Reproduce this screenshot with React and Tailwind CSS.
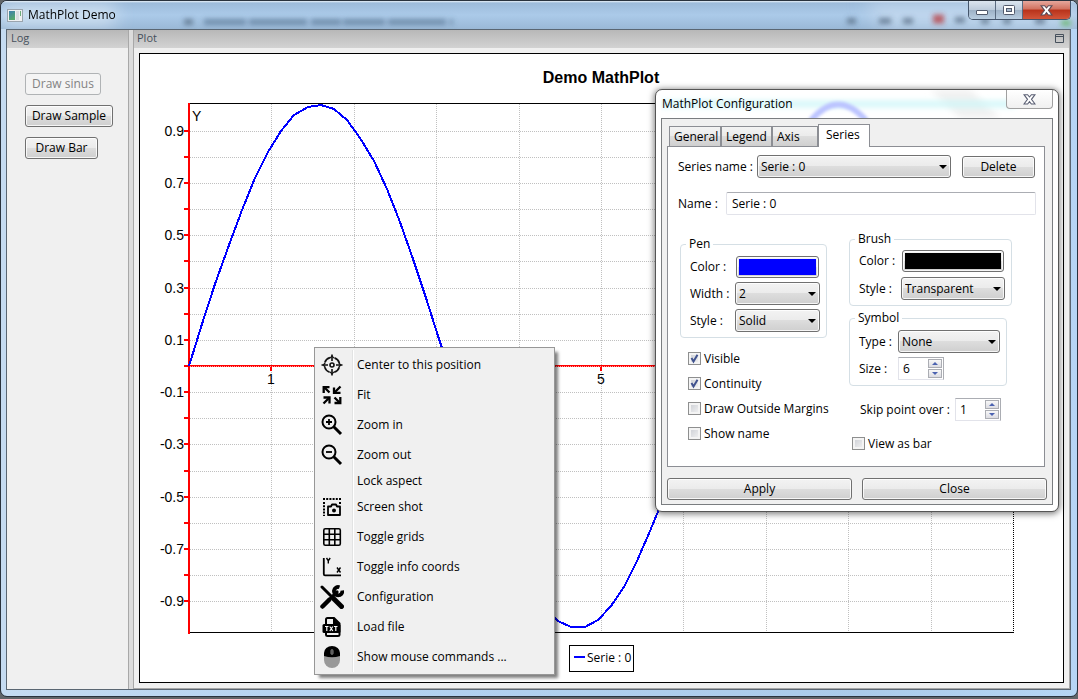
import React from "react";

const X0 = 189;
const Y0 = 366;
const UNIT_X = 82.4;
const UNIT_Y = 261.6;

const px = (x) => Math.round(X0 + x * UNIT_X);
const py = (y) => Math.round(Y0 - y * UNIT_Y);

const sinePoints = Array.from({ length: 63 }, (_, i) => {
  const x = i * 0.16;
  return `${px(x)},${py(Math.sin(x))}`;
}).join(" ");

const columns = [1, 2, 3, 4, 5, 6, 7, 8, 9];
const rows = Array.from({ length: 19 }, (_, i) => (9 - i) / 10);

function Chart() {
  return (
    <svg
      viewBox="140 54 923 628"
      className="block h-full w-full font-['Liberation_Sans',sans-serif]"
      role="img"
      aria-label="Demo MathPlot"
    >
      <text x="601" y="83" textAnchor="middle" fontSize="16" fontWeight="700">
        Demo MathPlot
      </text>
      <g shapeRendering="crispEdges" fill="none">
        <path d="M190 103.5H1013M190 632.5H1013" stroke="#000" />
        <path d="M1013.5 104V633" stroke="#000" strokeDasharray="1 1" />
        {columns.map((c) => (
          <path key={c} d={`M${px(c) + 0.5} 104V632`} stroke="#c0c0c0" strokeDasharray="1 1" />
        ))}
        {rows.map((r) => (
          <path key={r} d={`M190 ${py(r) + 0.5}H1013`} stroke="#c0c0c0" strokeDasharray="1 1" />
        ))}
        <path d="M188 366H1013" stroke="#f00" strokeWidth="2" />
        <path d="M190 366.5H1013" stroke="#ff9a9a" strokeDasharray="1 1" />
        <path d="M189 103V634" stroke="#f00" strokeWidth="2" />
        {columns.map((c) => (
          <path key={c} d={`M${px(c)} 367V371`} stroke="#f00" strokeWidth="2" />
        ))}
        {rows.map((r) => (
          <path key={r} d={`M184 ${py(r)}H188`} stroke="#f00" strokeWidth="2" />
        ))}
        <polyline points={sinePoints} stroke="#00f" strokeWidth="2" />
      </g>
      <g fontSize="14">
        <text x="192" y="121">Y</text>
        {rows
          .filter((r) => Math.round(Math.abs(r) * 10) % 2 === 1)
          .map((r) => (
            <text key={r} x="184" y={py(r) + 5} textAnchor="end">
              {r.toFixed(1)}
            </text>
          ))}
        {[1, 3, 5, 7, 9].map((c) => (
          <text key={c} x={px(c)} y="384" textAnchor="middle">
            {c}
          </text>
        ))}
      </g>
      <rect x="569.5" y="645.5" width="64" height="26" fill="#fff" stroke="#000" />
      <path d="M574 657H585" stroke="#00f" strokeWidth="2" />
      <text x="587" y="662" fontSize="12" className="font-['Open_Sans',sans-serif]">
        Serie : 0
      </text>
    </svg>
  );
}

const icons = {
  center: (
    <g fill="none" stroke="#111">
      <circle cx="12" cy="12" r="7.6" strokeWidth="1.7" strokeDasharray="7.3 4.64" strokeDashoffset="-2.32" />
      <circle cx="12" cy="12" r="2" strokeWidth="1.6" />
      <path d="M12 1.5V8M12 16V22.5M1.5 12H8M16 12H22.5" strokeWidth="1.6" />
      <path
        d="M10 5.200L12 3.200L14 5.200M10 18.800L12 20.800L14 18.800M5.200 10L3.200 12L5.200 14M18.800 10L20.800 12L18.800 14"
        strokeWidth="1.2"
      />
    </g>
  ),
  fit: (
    <g fill="none" stroke="#000" strokeWidth="2.3">
      <path d="M4 4L9.500 9.500M20.500 3.500L14.500 9.500M3.500 20.500L9.500 14.500M14.500 14.500L20 20" />
      <path d="M3.700 10V4.200H9.500M14 4.500V9.800H20.500M3.500 14.500H9.500V20.500M20.300 14V20H14.500" />
    </g>
  ),
  zoomIn: (
    <g fill="none" stroke="#000">
      <circle cx="9" cy="9" r="6.500" strokeWidth="2" />
      <path d="M13.500 13.500L21 21" strokeWidth="3" />
      <path d="M6 9H12M9 6V12" strokeWidth="1.8" />
    </g>
  ),
  zoomOut: (
    <g fill="none" stroke="#000">
      <circle cx="9" cy="9" r="6.500" strokeWidth="2" />
      <path d="M13.500 13.500L21 21" strokeWidth="3" />
      <path d="M6 9H12" strokeWidth="1.8" />
    </g>
  ),
  shot: (
    <g>
      <path
        d="M3 4H21M4 7V21M20 7V9"
        fill="none"
        stroke="#000"
        strokeWidth="2"
        strokeDasharray="2 1.200"
      />
      <path
        d="M8 11.500H11L12 9.500H16L17 11.500H20V20H8Z"
        fill="none"
        stroke="#000"
        strokeWidth="1.8"
        strokeLinejoin="round"
      />
      <circle cx="14" cy="15.500" r="2" />
    </g>
  ),
  grid: (
    <g fill="none" stroke="#000" strokeWidth="1.6">
      <rect x="3.800" y="3.800" width="16.500" height="16.500" rx="1.500" />
      <path d="M9.300 3.800V20.300M14.800 3.800V20.300M3.800 9.300H20.300M3.800 14.800H20.300" />
    </g>
  ),
  coords: (
    <g fill="none" stroke="#000">
      <path d="M3.800 3V19Q3.800 20.300 5 20.300H21" strokeWidth="1.8" />
      <path d="M6.500 3L8.300 5.700L10.200 3M8.300 5.700V8.500M17 12.500L20.500 17.500M20.500 12.500L17 17.500" strokeWidth="1.400" />
    </g>
  ),
  config: (
    <g fill="none" stroke="#000" strokeLinecap="round">
      <path d="M2 2L11 11" strokeWidth="3" />
      <path d="M14 14L21.500 21.500" strokeWidth="5" />
      <path d="M2.500 21.500L9 15" strokeWidth="4.500" />
      <path d="M9 15L17 7" strokeWidth="3.200" />
      <path d="M19.500 2.200A4.200 4.200 0 1 0 22.300 5.500" strokeWidth="3.800" strokeLinecap="butt" />
    </g>
  ),
  file: (
    <g>
      <path
        d="M6 9V4.500Q6 3 7.500 3H14L19.500 8.500V20Q19.500 21 18 21H7.500Q6 21 6 20V17"
        fill="none"
        stroke="#000"
        strokeWidth="2"
      />
      <path d="M13 2.500L20 9.500H13Z" />
      <rect x="2.500" y="9" width="18" height="9" rx="1.500" />
      <path
        d="M5 11.500H8.500M6.800 11.500V16M9.800 11.500L12.800 16M12.800 11.500L9.800 16M14 11.500H17.500M15.800 11.500V16"
        fill="none"
        stroke="#fff"
        strokeWidth="1.200"
      />
    </g>
  ),
  mouse: (
    <g>
      <path d="M4 10H20V15A8 8 0 0 1 4 15Z" fill="#999" />
      <path d="M4 11V8A8 7 0 0 1 20 8V11Q12 13.500 4 11Z" fill="#000" />
      <rect x="10.800" y="4.500" width="2.400" height="5" rx="1.200" fill="#555" stroke="#888" strokeWidth=".6" />
    </g>
  ),
};

const menuItems = [
  ["Center to this position", "center"],
  ["Fit", "fit"],
  ["Zoom in", "zoomIn"],
  ["Zoom out", "zoomOut"],
  ["Lock aspect", null],
  ["Screen shot", "shot"],
  ["Toggle grids", "grid"],
  ["Toggle info coords", "coords"],
  ["Configuration", "config"],
  ["Load file", "file"],
  ["Show mouse commands ...", "mouse"],
];

function ContextMenu() {
  return (
    <div
      role="menu"
      className="absolute left-[314px] top-[347px] w-[241px] border border-[#979797] bg-[#f0f0f0] p-[2px] shadow-[4px_4px_3px_-1px_rgba(0,0,0,0.5)]"
    >
      {menuItems.map(([label, icon]) => (
        <button
          key={label}
          role="menuitem"
          className={`flex w-full items-center text-left ${icon ? "h-[30px]" : "h-[22px]"}`}
        >
          <span className="flex h-full w-[36px] items-center border-r border-[#e2e3e3] pl-[3px]">
            {icon && (
              <svg width="24" height="24" viewBox="0 0 24 24" aria-hidden="true">
                {icons[icon]}
              </svg>
            )}
          </span>
          <span className="flex h-full items-center border-l border-white pl-[3px]">{label}</span>
        </button>
      ))}
    </div>
  );
}

const face =
  "rounded-[3px] border border-[#707070] bg-[linear-gradient(#f3f3f3,#ebebeb_49%,#dddddd_50%,#cfcfcf)] shadow-[inset_0_0_0_1px_rgba(255,255,255,0.8)]";

function PushButton({ className, children, ...rest }) {
  return (
    <button className={`${face} flex h-[22px] items-center justify-center ${className}`} {...rest}>
      {children}
    </button>
  );
}

function Combo({ id, value, className }) {
  return (
    <span className={`relative block ${className}`}>
      <select id={id} defaultValue={value} className={`${face} block h-[23px] w-full appearance-none pl-[3px] pr-5`}>
        <option>{value}</option>
      </select>
      <svg
        className="pointer-events-none absolute right-[4px] top-[10px]"
        width="8"
        height="4"
        viewBox="0 0 8 4"
        aria-hidden="true"
      >
        <path d="M0 0H8L4 4Z" />
      </svg>
    </span>
  );
}

function Spinner({ id, value }) {
  return (
    <span className="flex h-[23px] w-[46px] border border-[#e2e3ea] border-r-[#abadb3] border-t-[#abadb3] bg-white">
      <input
        id={id}
        type="number"
        defaultValue={value}
        className="w-[29px] bg-transparent pl-[4px] outline-none [appearance:textfield] [&::-webkit-inner-spin-button]:appearance-none"
      />
      <span className="flex w-[14px] flex-col gap-px py-px">
        {["M0 3H6L3 0Z", "M0 0H6L3 3Z"].map((d, i) => (
          <button
            key={d}
            aria-label={i === 0 ? "Increase" : "Decrease"}
            className="flex flex-1 items-center justify-center border border-[#abadb3] bg-linear-to-b from-[#f8f8f8] to-[#dcdce2]"
          >
            <svg width="6" height="3" viewBox="0 0 6 3" aria-hidden="true">
              <path d={d} fill="#4b62b0" />
            </svg>
          </button>
        ))}
      </span>
    </span>
  );
}

function Check({ label, checked }) {
  return (
    <label className="flex h-[25px] items-center gap-[3px] whitespace-nowrap">
      <span className="relative flex">
        <input
          type="checkbox"
          defaultChecked={checked}
          className="peer size-[13px] appearance-none border border-[#8e8f8f] bg-linear-to-br from-[#c9ccd2] to-[#f6f6f6] shadow-[inset_0_0_0_2px_#f4f4f4]"
        />
        <svg
          className="pointer-events-none absolute left-0 top-0 hidden peer-checked:block"
          width="13"
          height="13"
          viewBox="0 0 13 13"
          aria-hidden="true"
        >
          <path d="M3.500 6L5.500 9.500L9.500 2.800" fill="none" stroke="#40528e" strokeWidth="2" />
        </svg>
      </span>
      {label}
    </label>
  );
}

function Group({ title, className, children }) {
  return (
    <fieldset className={`rounded-[4px] border border-[#d5dfe5] pl-[5px] ${className}`}>
      <legend className="h-[16px] px-[3px] leading-[16px]">{title}</legend>
      <div className="pl-[4px]">{children}</div>
    </fieldset>
  );
}

function ConfigDialog() {
  return (
    <section
      aria-label="MathPlot Configuration"
      className="absolute left-[655px] top-[89px] w-[404px] rounded-[7px] border border-[#555] bg-white px-[5px] pb-[6px] shadow-[0_1px_6px_1px_rgba(0,0,0,0.5)]"
    >
      <div className="relative flex h-[28px] justify-between overflow-hidden">
        <svg className="absolute inset-0 size-full" viewBox="0 0 393 28" aria-hidden="true">
          <defs>
            <filter id="soft" x="-20%" y="-60%" width="140%" height="220%">
              <feGaussianBlur stdDeviation="1.8" />
            </filter>
            <filter id="band" filterUnits="userSpaceOnUse" x="-20" y="-10" width="430" height="50">
              <feGaussianBlur stdDeviation="3" />
            </filter>
          </defs>
          <path d="M270 0L300 28H340L310 0Z" fill="#f1f1f1" filter="url(#band)" />
          <path d="M0 14H355" stroke="#cdf6f8" strokeWidth="6" filter="url(#band)" />
          <path d="M150 31Q177 -2 206 31" fill="none" stroke="#bcc4ff" strokeWidth="6" filter="url(#soft)" />
        </svg>
        <h2 className="relative pl-px pt-[5px] leading-[18px]">MathPlot Configuration</h2>
        <button
          aria-label="Close dialog"
          className="relative flex h-[19px] w-[47px] items-center justify-center rounded-b-[4px] border border-t-0 border-[#a0a0a0] bg-linear-to-b from-white to-[#f0f0f0]"
        >
          <CloseGlyph stroke="#5a5f73" />
        </button>
      </div>
      <div className="border border-[#7a7d80] bg-[#f0f0f0] p-[5px] pb-[4px]">
        <div role="tablist" className="flex h-[22px] items-end pl-[2px]">
          {[
            ["General", "w-[52px]"],
            ["Legend", "w-[51px]"],
            ["Axis", "w-[46px]"],
          ].map(([name, width]) => (
            <button
              key={name}
              role="tab"
              className={`${width} h-[20px] border border-b-0 border-[#8c8e94] bg-[linear-gradient(#f3f3f3,#ebebeb_49%,#dddddd_50%,#cfcfcf)] pl-[4px] text-left leading-[19px]`}
            >
              {name}
            </button>
          ))}
          <button
            role="tab"
            aria-selected="true"
            className="relative z-10 -mb-px h-[23px] w-[52px] border border-b-0 border-[#8c8e94] bg-white pb-[2px] pl-[7px] text-left"
          >
            Series
          </button>
        </div>
        <div className="mr-[2px] h-[321px] border border-[#8c8e94] bg-white">
          <div className="flex items-center pl-[10px] pt-[8px]">
            <label htmlFor="series" className="w-[79px]">
              Series name :
            </label>
            <Combo id="series" value="Serie : 0" className="w-[194px]" />
            <PushButton className="ml-[11px] w-[73px]">Delete</PushButton>
          </div>
          <div className="flex items-center pl-[10px] pt-[14px]">
            <label htmlFor="name" className="w-[48px]">
              Name :
            </label>
            <input
              id="name"
              defaultValue="Serie : 0"
              className="h-[23px] w-[310px] rounded-[2px] border border-[#e2e3ea] border-t-[#abadb3] px-[5px] outline-none"
            />
          </div>
          <div className="flex gap-[22px] pl-[12px] pt-[16px]">
            <div className="w-[147px] pt-[5px]">
              <Group title="Pen" className="pb-[5px]">
                <div className="grid grid-cols-[45px_85px] items-center gap-y-[4px] pt-[4px]">
                  <span>Color :</span>
                  <PushButton className="mx-px w-[83px] p-[2px]" aria-label="Pen color">
                    <span className="h-full w-full bg-[#0000ff]" />
                  </PushButton>
                  <label htmlFor="pen-width">Width :</label>
                  <Combo id="pen-width" value="2" />
                  <label htmlFor="pen-style">Style :</label>
                  <Combo id="pen-style" value="Solid" />
                </div>
              </Group>
              <div className="pl-[8px] pt-[8px]">
                <Check label="Visible" checked />
                <Check label="Continuity" checked />
                <Check label="Draw Outside Margins" />
                <Check label="Show name" />
              </div>
            </div>
            <div className="flex flex-col items-start">
              <Group title="Brush" className="w-[163px] pb-[5px]">
                <div className="grid grid-cols-[42px_104px] items-center gap-y-[5px] pt-[3px]">
                  <span>Color :</span>
                  <PushButton className="mx-px w-[102px] p-[2px]" aria-label="Brush color">
                    <span className="h-full w-full bg-black" />
                  </PushButton>
                  <label htmlFor="brush-style">Style :</label>
                  <Combo id="brush-style" value="Transparent" />
                </div>
              </Group>
              <Group title="Symbol" className="mt-[4px] w-[158px] pb-[5px]">
                <div className="grid grid-cols-[39px_102px] items-center gap-y-[4px] pt-[4px]">
                  <label htmlFor="symbol-type">Type :</label>
                  <Combo id="symbol-type" value="None" />
                  <label htmlFor="symbol-size">Size :</label>
                  <Spinner id="symbol-size" value={6} />
                </div>
              </Group>
              <div className="mt-[12px] flex items-center pl-[11px]">
                <label htmlFor="skip" className="w-[95px]">
                  Skip point over :
                </label>
                <Spinner id="skip" value={1} />
              </div>
              <div className="pl-[3px] pt-[10px]">
                <Check label="View as bar" />
              </div>
            </div>
          </div>
        </div>
        <div className="flex gap-[10px] pt-[11px]">
          <PushButton className="flex-1">Apply</PushButton>
          <PushButton className="flex-1">Close</PushButton>
        </div>
      </div>
    </section>
  );
}

function CloseGlyph({ stroke }) {
  return (
    <svg width="13" height="11" viewBox="0 0 13 11" aria-hidden="true">
      <path
        d="M1 .7H4.600L6.500 3L8.400 .7H12L8.500 5.300L12 10H8.400L6.500 7.700L4.600 10H1L4.500 5.300Z"
        fill="#fff"
        stroke={stroke}
        strokeWidth="1.100"
      />
    </svg>
  );
}

function TitleBar() {
  return (
    <header className="relative flex h-[28px] items-start justify-between overflow-hidden bg-[linear-gradient(#e8f0f8,#9dbbda_2px,#abcae9_50%,#9ab8d6)] pl-[6px] pr-[6px]">
      <svg
        className="absolute inset-0 size-full"
        viewBox="0 0 1076 28"
        preserveAspectRatio="none"
        aria-hidden="true"
      >
        <defs>
          <filter id="haze" filterUnits="userSpaceOnUse" x="-20" y="-20" width="1120" height="70">
            <feGaussianBlur stdDeviation="2.5" />
          </filter>
          <filter id="glow" filterUnits="userSpaceOnUse" x="-40" y="-20" width="1160" height="70">
            <feGaussianBlur stdDeviation="9" />
          </filter>
        </defs>
        <g filter="url(#glow)">
          <path d="M0 4H115V24H0Z" fill="#e6eff8" opacity=".7" />
          <path d="M862 0H1076V28H880Z" fill="#c9dcf0" opacity=".7" />
        </g>
        <g filter="url(#haze)">
          <path d="M203 21H452" stroke="#54708e" strokeWidth="6" strokeDasharray="42 3 58 4 30 2" opacity=".6" />
          <path d="M183 21H192M846 20H855M878 20H890M902 20H912M954 19H964M980 20H988M1002 20H1010M1034 20H1044" stroke="#4c6178" strokeWidth="6" opacity=".65" />
          <path d="M932 18H943" stroke="#b8383c" strokeWidth="9" opacity=".75" />
          <path d="M1060 22H1070" stroke="#62b35e" strokeWidth="6" opacity=".7" />
        </g>
      </svg>
      <div className="relative flex items-center gap-[5px] pt-[5px]">
        <svg width="16" height="16" viewBox="0 0 16 16" aria-hidden="true">
          <defs>
            <linearGradient id="app" x1="0" y1="0" x2="0.4" y2="1">
              <stop offset="0" stopColor="#3f7fb0" />
              <stop offset="1" stopColor="#56a86c" />
            </linearGradient>
          </defs>
          <rect x=".5" y="2.500" width="15" height="12" fill="#eef0f2" stroke="#9aa4ae" />
          <rect x="2" y="4" width="6" height="9" fill="url(#app)" />
          <rect x="9" y="4" width="3" height="9" fill="#dadde0" />
          <rect x="13" y="4" width="1" height="5" fill="#6fae7c" />
        </svg>
        <h1 className="leading-[18px]">MathPlot Demo</h1>
      </div>
      <div className="relative flex h-[19px] overflow-hidden rounded-b-[5px] border border-t-0 border-[#44546a]">
        <button
          aria-label="Minimize"
          className="flex w-[27px] items-center justify-center border-r border-[#5a6b80] bg-[linear-gradient(#dbe5ef,#bccbdb_49%,#9db1c6_50%,#b9cde0)] pt-[5px]"
        >
          <span className="h-[5px] w-[12px] rounded-[1px] border border-[#525a6c] bg-white" />
        </button>
        <button
          aria-label="Maximize"
          className="flex w-[27px] items-center justify-center border-r border-[#5a6b80] bg-[linear-gradient(#dbe5ef,#bccbdb_49%,#9db1c6_50%,#b9cde0)]"
        >
          <svg width="12" height="10" viewBox="0 0 12 10" aria-hidden="true">
            <rect x=".5" y=".5" width="11" height="9" rx="1" fill="#fff" stroke="#525a6c" />
            <rect x="3.500" y="3.500" width="5" height="3" fill="#a8bace" stroke="#525a6c" />
          </svg>
        </button>
        <button
          aria-label="Close"
          className="flex w-[47px] items-center justify-center bg-[linear-gradient(#e6a79c,#d1715f_45%,#b8321a_50%,#d2553a)]"
        >
          <CloseGlyph stroke="#5c4a55" />
        </button>
      </div>
    </header>
  );
}

const caption =
  "flex h-[18px] items-center bg-linear-to-b from-[#b8b8b8] to-[#d3d3d3] pb-[2px] text-[11px] text-[#46505c]";

export default function App() {
  return (
    <div className="relative h-screen min-h-[699px] bg-[#606468] pb-[2px] font-['Open_Sans',sans-serif] text-[12px] leading-[16px] text-black">
      <div className="flex h-full flex-col overflow-hidden rounded-[7px] border border-[#29323d] bg-[linear-gradient(90deg,#c5dbf1,#b4d3f2_30%,#abcbea_80%,#b6d6f5)]">
        <TitleBar />
        <div className="flex min-h-0 flex-1 pb-[6px] pl-[5px] pr-[6px]">
          <div className="flex min-w-0 flex-1 border border-[#5a6672] bg-[#dcdcdc]">
            <aside className="w-[122px] border-r border-[#a8a8a8] bg-[#f0f0f0]">
              <div className={`${caption} pl-[4px]`}>Log</div>
              <div className="flex flex-col items-start gap-[10px] pl-[18px] pt-[25px]">
                <button
                  disabled
                  className="h-[22px] w-[76px] rounded-[3px] border border-[#b0b3b5] bg-[#f4f4f4] text-[#838383]"
                >
                  Draw sinus
                </button>
                <PushButton className="w-[88px]">Draw Sample</PushButton>
                <PushButton className="w-[73px]">Draw Bar</PushButton>
              </div>
            </aside>
            <main className="ml-[4px] flex min-w-0 flex-1 flex-col border-b border-l border-r border-[#a8a8a8] bg-[#f0f0f0]">
              <div className={`${caption} justify-between pl-[3px] pr-[5px]`}>
                Plot
                <button aria-label="Maximize pane">
                  <svg width="9" height="9" viewBox="0 0 9 9" className="block" aria-hidden="true">
                    <path d="M.5 .5H8.500V8.500H.5ZM0 2.500H9" fill="none" stroke="#46505c" />
                  </svg>
                </button>
              </div>
              <div className="min-h-0 flex-1 p-[5px]">
                <div className="h-full border border-black bg-white">
                  <Chart />
                </div>
              </div>
            </main>
          </div>
        </div>
      </div>
      <ContextMenu />
      <ConfigDialog />
    </div>
  );
}
